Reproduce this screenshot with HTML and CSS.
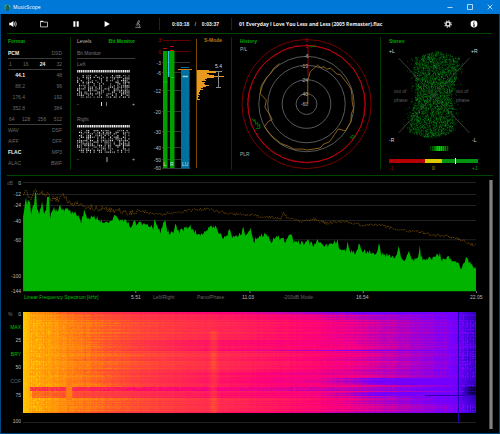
FILE: index.html
```html
<!DOCTYPE html>
<html lang="en">
<head>
<meta charset="utf-8">
<title>MusicScope</title>
<link rel="stylesheet" href="styles.css">
</head>
<body>
<div class="window">
  <header class="titlebar">
    <svg class="app-icon" viewBox="0 0 14 14"><circle cx="7" cy="7" r="6.6" fill="#1f8f86"/><path d="M8.5 2 5 6l2 2-3 4h6M7 4l3 4-1 3" fill="none" stroke="#06333f" stroke-width="1.6"/><path d="M3 4l2-2M10 3l2 3" stroke="#7fe0b0" stroke-width="1"/></svg>
    <h1 class="app-name">MusicScope</h1>
    <div class="window-buttons">
      <button aria-label="Minimize"><svg viewBox="0 0 6 6"><path d="M.5 3.5h5"/></svg></button>
      <button aria-label="Maximize"><svg viewBox="0 0 6 6"><path d="M.5 .5h5v5h-5z"/></svg></button>
      <button aria-label="Close"><svg viewBox="0 0 6 6"><path d="M.7 .7l4.6 4.6M5.3 .7L.7 5.3"/></svg></button>
    </div>
  </header>

  <div class="toolbar">
    <div class="tools">
      <button aria-label="Volume"><svg viewBox="0 0 8 8"><path d="M.3 2.8h1.6L4.4.9v6.2L1.9 5.2H.3z" fill="#fff"/><path d="M5.3 2.3q1 1.7 0 3.4M6.5 1.4q1.7 2.6 0 5.2" fill="none" stroke="#ddd" stroke-width=".8"/></svg></button>
      <button aria-label="Open folder"><svg viewBox="0 0 8 8"><path d="M.5 6.9V1.2h2.4l.8.9h3.8v4.8z" fill="none" stroke="#ddd" stroke-width=".8"/><path d="M.5 1.6h2.8" stroke="#fff" stroke-width="1"/></svg></button>
      <button aria-label="Pause"><svg viewBox="0 0 8 8"><path d="M1.4 1.2h2v5.6h-2zM4.7 1.2h2v5.6h-2z" fill="#fff"/></svg></button>
      <button aria-label="Play"><svg viewBox="0 0 8 8"><path d="M1.6 1l5.2 3-5.2 3z" fill="#fff"/></svg></button>
      <button aria-label="Analyze"><svg viewBox="0 0 8 8"><path d="M4.6.4L3 3.8l1 .5L5.6 1zM1.8 5h3M1.3 7.4h5.6M4.6 3.4q2.6 1.5 .6 3.8" fill="none" stroke="#aaa" stroke-width=".7"/></svg></button>
    </div>
    <div class="time"><span>0:03:18</span><span class="slash">/</span><span>0:03:37</span></div>
    <div class="track">01 Everyday I Love You Less and Less (2005 Remaster).flac</div>
    <div class="extras">
      <button aria-label="Settings"><svg viewBox="0 0 8 8"><circle cx="4" cy="4" r="2" fill="none" stroke="#ddd" stroke-width="1.5"/><circle cx="4" cy="4" r="3.2" fill="none" stroke="#ddd" stroke-width="1.1" stroke-dasharray="1.25 1.263"/></svg></button>
      <button aria-label="Information"><svg viewBox="0 0 8 8"><circle cx="4" cy="4" r="3.4" fill="#fff"/><path d="M4 1.6v1.1M3.3 3.6H4v2.3M3.1 6h1.8" fill="none" stroke="#000" stroke-width=".9"/></svg></button>
    </div>
  </div>

  <main class="content">
    <div class="panels">
      <section class="panel format">
        <h2>Format</h2>
        <div class="row rule"><b>PCM</b><span>DSD</span></div>
        <div class="row rule inset"><span>1</span><span>16</span><b>24</b><span>32</span></div>
        <div class="row rates"><b>44.1</b><span>48</span></div>
        <div class="row rates"><span>88.2</span><span>96</span></div>
        <div class="row rates"><span>176.4</span><span>192</span></div>
        <div class="row rates"><span>352.8</span><span>384</span></div>
        <div class="row rule inset"><span>64</span><span>128</span><span>256</span><span>512</span></div>
        <div class="row"><span>WAV</span><span>DSF</span></div>
        <div class="row"><span>AIFF</span><span>DFF</span></div>
        <div class="row"><b>FLAC</b><span>MP3</span></div>
        <div class="row"><span>ALAC</span><span>BWF</span></div>
      </section>

      <section class="panel bits">
        <div class="tabs"><button class="tab">Levels</button><button class="tab active">Bit Monitor</button></div>
        <div class="row rule"><span>Bit Monitor</span></div>
        <div class="row"><span>Left</span></div>
        <svg class="bit-map" data-seed="3" viewBox="0 0 53 28"></svg>
        <svg class="offset" viewBox="77 98 58 16"><path d="M101.500 102v4" stroke="#ddd"/><path d="M106.500 102v4" stroke="#777"/><text x="77" y="106">-</text><text x="132" y="106">+</text></svg>
        <div class="row"><span>Right</span></div>
        <svg class="bit-map" data-seed="8" viewBox="0 0 53 28"></svg>
        <svg class="offset" viewBox="77 98 58 16"><path d="M107 102v5" stroke="#aaa"/><text x="77" y="106">-</text><text x="132" y="106">+</text></svg>
      </section>

      <section class="panel ruled">
        <svg class="plot" id="meters" viewBox="140 37 91 133">
          <path d="M162 62.500h28M162 72.500h28M162 90.500h28M162 111.500h28M162 131.500h28M162 147.500h28M162 159.500h28M162 168.500h28" stroke="#333"/>
          <path d="M163 40.500h27M163 51.500h27" stroke="#600"/>
          <path d="M163 48.500h4M170 46.500h4" stroke="#c00"/>
          <rect x="163" y="51" width="4.500" height="117" fill="#00a000"/>
          <rect x="170" y="51" width="4.500" height="117" fill="#00a000"/>
          <path d="M163 82h4.500M170 77.500h4.500" stroke="#0c0"/>
          <path d="M170 50.500h4" stroke="#e00"/>
          <rect x="168" y="51" width="1.500" height="26" fill="#40b8f0"/>
          <rect x="181" y="70" width="8.500" height="98.500" fill="#00709f"/>
          <path d="M181 67.500h8" stroke="#00709f"/>
          <path d="M178 69.500h14" stroke="#c98018"/>
          <path d="M182.500 76.500h5.500" stroke="#9cc" stroke-width="1.500"/>
          <path d="M196.500 39v129" stroke="#7a4c00"/>
          <path id="histogram" fill="#e89a20"/>
          <path d="M218.500 71v16M216 71.500h5M216 87.500h5" stroke="#888" fill="none"/>
          <g class="end"><text x="161" y="42" class="red">3</text><text x="161" y="53.500" class="red">0</text><text x="161" y="64.500">-3</text><text x="161" y="74.500">-6</text><text x="161" y="92.500">-12</text><text x="161" y="113.500">-20</text><text x="161" y="133.500">-30</text><text x="161" y="149.500">-40</text><text x="161" y="161.500">-50</text><text x="161" y="170">-60</text></g>
          <g class="bright"><text x="163.500" y="165.500">L</text><text x="170" y="165.500">R</text><text x="182" y="165.500">LU</text><text x="215" y="68">5.4</text></g>
          <text x="204" y="42" class="amber bold">S-Mode</text>
        </svg>
      </section>

      <section class="panel ruled">
        <svg class="plot" viewBox="231 37 149 133">
          <g fill="none">
            <g stroke="#5a5a5a"><circle cx="306" cy="104.500" r="48"/><circle cx="306" cy="104.500" r="39"/><circle cx="306" cy="104.500" r="24.500"/><circle cx="306" cy="104.500" r="10.500"/></g>
            <circle cx="306" cy="104.500" r="65" stroke="#7a0000"/><circle cx="306" cy="104.500" r="59" stroke="#a80010"/>
            <path id="true-peak" stroke="#c80010" stroke-width=".8"/>
            <path d="M307.500 46v30" stroke="#a00000"/>
            <path id="loudness-trace" stroke="#b07820" stroke-width=".8"/>
            <path d="M309 46l2 1 2-1 3 1M251 119l2 3 1-2 1 5 2-2 0 4 2-2 0 4-4 0M350 138l2-2 3 1-2 2z" stroke="#008c00" stroke-width=".8"/>
          </g>
          <g class="middle"><text x="306" y="42" class="red">3</text><text x="306" y="48" class="red">0</text><text x="306" y="58.500">-6</text><text x="304" y="68">-13</text><text x="304" y="82">-24</text><text x="304" y="96">-40</text><text x="304" y="106.500">-60</text></g>
          <text x="239" y="43" class="green bold">History</text>
          <text x="239" y="51" class="light">P/L</text><text x="239" y="157" class="light">PLR</text>
        </svg>
      </section>

      <section class="panel">
        <svg class="plot" viewBox="380 37 112 133">
          <path id="scope" stroke="#00690c" stroke-width=".9"/>
          <path id="scope-bright" stroke="#12a824" stroke-width=".9"/>
          <path d="M397.500 58l71 75M468.500 58l-71 75" stroke="#3a3a3a"/>
          <g id="balance"></g>
          <rect x="388" y="159" width="36" height="4" fill="#b40000"/><rect x="424" y="159" width="17" height="4" fill="#d8cc00"/><rect x="441" y="159" width="36" height="4" fill="#009410"/>
          <path d="M454.500 158v6" stroke="#fff"/>
          <text x="388" y="43" class="green bold">Stereo</text>
          <g class="bright"><text x="388" y="53">+L</text><text x="470" y="53">+R</text><text x="388" y="142">-R</text><text x="471" y="142">-L</text></g>
          <g class="dim"><text x="393" y="93">out of</text><text x="393" y="102">phase</text><text x="455" y="93">out of</text><text x="455" y="102">phase</text></g>
          <text x="388" y="170" class="dark-red">-1</text><text x="431" y="170" class="yellow">0</text><text x="471" y="170" class="green">+1</text>
        </svg>
      </section>
    </div>

    <div class="analysis">
      <div class="charts">
        <svg class="plot spectrum" viewBox="7 176 476 117">
          <path d="M23 182.500h452M23 194.500h452M23 205.500h452M23 220.500h452M23 239.500h452" stroke="#222"/>
          <path id="spectrum-fill" fill="#00b400"/>
          <path id="spectrum-peak" fill="none" stroke="#855705" stroke-width=".9" stroke-dasharray="1.200 1"/>
          <path d="M135.500 291v2M249.500 291v2M362.500 291v2M475.500 291v2" stroke="#888"/>
          <text x="7" y="184.500" class="dim">dB</text>
          <g class="end"><text x="21" y="184.500">0</text><text x="21" y="196">-12</text><text x="21" y="207">-24</text><text x="21" y="222.500">-40</text><text x="21" y="241.500">-60</text><text x="21" y="278">-100</text><text x="21" y="292.500">-144</text></g>
        </svg>
        <div class="axis">
          <button class="mode active">Linear Frequency Spectrum [kHz]</button><span>5.51</span>
          <button class="mode">Left/Right</button><button class="mode">Pano/Phase</button><span>11.03</span>
          <button class="mode">-200dB Mode</button><span>16.54</span><span>22.05</span>
        </div>
        <div class="spectrogram">
          <div class="scale">
            <div class="percent"><span>%</span><b>0</b></div>
            <button class="mode active">MAX</button><span>25</span>
            <button class="mode active">BRY</button><span>50</span>
            <button class="mode">COF</button><span>75</span>
            <span class="last">100</span>
          </div>
          <canvas id="waterfall" width="452" height="111"></canvas>
        </div>
      </div>
      <div class="scrollbar"></div>
    </div>
  </main>
</div>
<script src="charts.js"></script>
</body>
</html>
```

FILE: styles.css
```css
* { box-sizing: border-box; }
body { margin: 0; background: #000; color: #bbb; font: 5px/8px "Liberation Sans", Arial, sans-serif; }
button { margin: 0; padding: 0; border: 0; background: none; color: inherit; font: inherit; text-align: left; white-space: nowrap; }
h1, h2 { margin: 0; font-size: 5px; line-height: 8px; }
svg { display: block; }

.window { display: flex; flex-direction: column; min-height: 100vh; border: solid #004a84; border-width: 0 1px 1px; }
.titlebar { display: flex; align-items: center; height: 14px; margin: 0 -1px; padding: 0 18px 0 4px; background: #0078d7; color: #fff; }
.app-icon { width: 7px; height: 7px; margin-right: 2px; }
.app-name { font: 5px/8px "Open Sans", sans-serif; }
.window-buttons { display: flex; gap: 14px; margin-left: auto; }
.titlebar { padding-right: 7px; }
.window-buttons svg { width: 6px; height: 6px; fill: none; stroke: #fff; stroke-width: .7; }

.toolbar { display: flex; align-items: center; height: 20px; margin: 0 7px 0 6px; border-bottom: 1px solid #004600; font-weight: bold; color: #eee; }
.toolbar svg { width: 8px; height: 8px; }
.tools { display: flex; justify-content: space-between; width: 152px; padding: 0 17px 0 2px; }
.time { display: flex; justify-content: space-between; width: 73px; height: 12px; padding: 0 12px; border: solid #003c00; border-width: 0 1px; line-height: 12px; }
.slash { font-weight: normal; }
.track { flex: 1; padding-left: 7px; font-family: "Open Sans", sans-serif; white-space: nowrap; }
.extras { display: flex; gap: 18px; padding-right: 14px; }

.content { display: flex; flex-direction: column; flex: 1; padding: 3px 6px 4px; }
.panels { display: grid; grid-template-columns: 64fr 69fr 92fr 149fr 112fr; padding-bottom: 5px; border-bottom: 1px solid #004600; }
.panel { min-width: 0; }
.ruled, .format { border-right: 1px solid #003800; }
.panel h2 { margin-bottom: 3px; color: #00a800; }
.format { padding: 0 8px 0 1px; color: #6a6a6a; }
.bits { padding: 0 5px 0 6px; color: #777; }
.tabs { display: flex; justify-content: space-between; margin-bottom: 3px; color: #bbb; }
.active { color: #00b400; }
.tab.active { font-weight: bold; }
.row { display: flex; justify-content: space-between; height: 11px; line-height: 11px; }
.row b { color: #eee; }
.rule { border-bottom: 1px solid #3c3c3c; }
.inset { padding-left: 1px; }
.rates { display: grid; grid-template-columns: 17fr 37fr; text-align: right; }
.bit-map { width: 92%; height: 28px; }
.offset { width: 100%; height: 16px; }
.plot { width: 100%; height: auto; }

text { font-size: 5px; fill: #bbb; }
.end text { text-anchor: end; }
.middle text { text-anchor: middle; }
.light text, text.light { fill: #aaa; }
.bright text { fill: #ddd; }
.dim text, text.dim { fill: #5c5c5c; }
text.red { fill: #c00000; }
text.dark-red { fill: #a00000; }
text.green { fill: #00a800; }
text.yellow { fill: #b8a800; }
text.amber { fill: #b87818; }
text.bold { font-weight: bold; }

.analysis { display: flex; justify-content: space-between; gap: 5px; flex: 1; }
.charts { flex: 1; min-width: 0; }
.scrollbar { width: 4px; margin-top: 4px; background: #808080; border: solid #505050; border-width: 0 1px; }
.axis { display: grid; grid-template-columns: 107fr 22fr 44fr 45fr 41fr 73fr 114fr 14fr; padding: 0 0 0 17px; height: 10px; line-height: 8px; }
.axis > * { min-width: 0; height: 8px; }
.mode { color: #666; }
.mode.active { color: #00c000; }
.spectrogram { display: flex; margin-top: 5px; }
.scale { display: grid; grid-template-rows: 12px 13px 14px 13px 14px 14px 14px 23px; align-content: start; width: 16px; padding-right: 2px; align-items: center; text-align: right; color: #bbb; }
.scale .mode { text-align: right; }
.percent { display: flex; justify-content: space-between; padding-left: 1px; color: #777; }
.percent b { font-weight: normal; color: #bbb; }
.last { align-self: end; }
#waterfall { flex: 1; min-width: 0; height: 111px; margin: 4px 8px 0 0; }
```

FILE: charts.js
```js
function randomizer(seed) {
  let s = seed * 7919 + 17;
  return function () {
    s = (s + 0x6d2b79f5) | 0;
    let t = Math.imul(s ^ (s >>> 15), 1 | s);
    t = (t + Math.imul(t ^ (t >>> 7), 61 | t)) ^ t;
    return ((t ^ (t >>> 14)) >>> 0) / 4294967296;
  };
}
function setPath(id, d) { document.getElementById(id).setAttribute("d", d); }
function sample(points, x) {
  for (let i = 1; i < points.length; i++) {
    if (x <= points[i][0]) {
      const a = points[i - 1], b = points[i];
      const t = Math.max(0, (x - a[0]) / (b[0] - a[0]));
      return a.slice(1).map((v, k) => v + (b[k + 1] - v) * t);
    }
  }
  return points[points.length - 1].slice(1);
}
function ramp(v, from, to) { return Math.max(0, Math.min(1, (v - from) / (to - from))); }

// Bit monitor
document.querySelectorAll(".bit-map").forEach(svg => {
  const rnd = randomizer(Number(svg.dataset.seed));
  let head = "", bright = "", soft = "";
  for (let c = 0; c < 29; c++) {
    const x = (c * 1.83).toFixed(2);
    head += `M${x} 0h1.3v2.6h-1.3z`;
    const density = 0.4 + rnd() * 0.5;
    for (let r = 0; r < 14; r++) {
      if (rnd() < density) {
        const cell = `M${x} ${(5 + r * 1.65).toFixed(2)}h1v1.3h-1z`;
        if (rnd() < 0.5) bright += cell; else soft += cell;
      }
    }
  }
  svg.innerHTML = `<path d="${head}" fill="#eee"/><path d="${bright}" fill="#ddd"/><path d="${soft}" fill="#888"/>`;
});

// Loudness histogram
const bars = [12, 25, 19, 10, 12, 17, 27, 17, 10, 8, 9, 5, 8, 7, 8, 12, 9, 6, 4, 6, 3, 3, 2, 2, 3, 1, 2, 1, 1, 3];
setPath("histogram", bars.map((w, i) => `M197 ${70 + i}h${w}v1H197z`).join(""));

// History circle
const rndHistory = randomizer(5);
let peak = "";
for (let a = 0; a <= 355; a += 2) {
  const r = 58.3 + rndHistory() * 1.1, t = (a - 90) * Math.PI / 180;
  peak += `${a ? "L" : "M"}${(306 + r * Math.cos(t)).toFixed(1)} ${(104.5 + r * Math.sin(t)).toFixed(1)}`;
}
setPath("true-peak", peak);
const trace = [[232,211],[232,140],[238,112],[250,104],[262,95],[272,102],[280,98],[290,107],[300,103],[310,111],[318,120],[330,122],[340,135],[355,155],[361,165],[366,185],[366,205],[370,225],[363,240],[362,265],[345,292],[325,288],[313,305],[305,315],[295,325],[280,333],[270,345],[250,349],[230,350],[215,346],[190,347],[170,337],[150,330],[135,318],[120,305],[102,280],[112,262],[125,258],[115,240],[103,222],[107,200],[88,180],[92,160],[95,150],[110,130],[120,120],[130,105],[145,88]];
setPath("loudness-trace", trace.map((p, i) => {
  const j = i > 1 ? rndHistory() - 0.5 : 0;
  return `${i ? "L" : "M"}${(p[0] / 3 + 230 + j).toFixed(1)} ${(p[1] / 3 + 34 + j).toFixed(1)}`;
}).join(""));

// Stereo scope
const rndScope = randomizer(11);
let dots = "", brightDots = "";
for (let i = 0; i < 3600; i++) {
  const v = rndScope() * 2 - 1;
  const half = 24 + 7 * Math.min(1, Math.abs(v) * 1.6);
  const u = i % 3 ? (rndScope() * 2 - 1) * 0.72 : rndScope() + rndScope() - 1;
  const x = 433 + u * half - v * 3;
  const y = 95 + v * (44 - Math.abs(u) * 9);
  const dot = `M${x.toFixed(1)} ${y.toFixed(1)}h.6`;
  if (i % 5 === 0) brightDots += dot; else dots += dot;
}
setPath("scope", dots);
setPath("scope-bright", brightDots);
const stripes = [60, 20, 90, 60, 110, 140, 160, 200, 170, 220, 150, 200, 130, 170, 90, 130, 50, 100, 30];
document.getElementById("balance").innerHTML = stripes.map((g, i) =>
  `<rect x="${429 + i}" y="146" width="1" height="5" fill="rgb(0,${g},0)"/>`).join("");

// Frequency spectrum
const level = [[23,217],[25,203],[26,198],[27,206],[28,200],[30,201],[31,214],[33,205],[34,205],[35,192],[36,192],[37,208],[39,214],[42,202],[44,213],[46,209],[47,197],[49,197],[50,217],[54,208],[57,212],[60,206],[64,211],[68,208],[72,213],[76,213],[81,222],[84,211],[87,219],[92,216],[96,217],[100,220],[106,223],[110,222],[114,216],[120,220],[126,220],[130,226],[135,218],[136,225],[138,221],[150,227],[153,227],[154,218],[156,226],[160,231],[165,220],[167,230],[170,233],[174,231],[175,223],[177,231],[180,231],[190,225],[192,230],[200,234],[207,229],[215,226],[217,231],[222,238],[230,230],[232,236],[240,234],[243,228],[245,235],[250,227],[253,242],[258,235],[266,234],[270,242],[276,236],[285,241],[291,232],[293,241],[305,243],[307,237],[309,243],[315,245],[317,237],[319,244],[330,245],[337,240],[339,250],[345,251],[347,243],[349,251],[356,252],[358,241],[360,249],[365,251],[376,253],[378,242],[380,253],[387,255],[390,256],[395,257],[398,246],[400,256],[405,259],[408,250],[410,258],[416,260],[419,246],[420,258],[430,258],[439,254],[441,259],[449,257],[455,262],[460,267],[465,258],[470,264],[475,267]];
const rndLevel = randomizer(21);
let fill = "M23 291";
for (let x = 23; x <= 475; x++) {
  const y = sample(level, x)[0] + (rndLevel() - 0.45) * (x < 50 ? 2 : 5);
  fill += `L${x} ${y.toFixed(1)}`;
}
setPath("spectrum-fill", fill + "L475 291Z");
const hold = [[23,195],[25,190],[28,196],[31,198],[34,189],[38,192],[42,193],[46,194],[52,199],[58,199],[63,195],[70,203],[80,204],[90,207],[100,209],[110,210],[120,211],[130,213],[140,211],[150,213],[160,214],[175,213],[190,210],[208,209],[220,212],[235,214],[250,215],[265,217],[280,218],[283,213],[287,218],[300,221],[313,219],[325,223],[342,221],[360,225],[380,225],[400,230],[415,231],[430,235],[445,236],[458,239],[470,244],[475,245]];
let line = "";
for (let x = 23; x <= 475; x++) {
  const y = sample(hold, x)[0] + (rndLevel() - 0.5) * (x < 140 ? 6 : 3);
  line += `${x > 23 ? "L" : "M"}${x} ${y.toFixed(1)}`;
}
setPath("spectrum-peak", line);

// Spectrogram: position along the palette follows frequency, shifted per row and cell
const palette = [[0,255,205,0],[10,255,165,5],[35,255,148,12],[65,255,118,22],[95,255,84,45],[150,255,56,68],[225,255,32,88],[280,255,8,110],[315,250,0,130],[350,215,0,158],[385,172,0,198],[415,145,0,228],[436,115,0,255],[450,60,0,210],[475,12,0,70]];
const canvas = document.getElementById("waterfall");
const ctx = canvas.getContext("2d");
const rnd = randomizer(31);
const columns = Array.from({ length: 452 }, () => (rnd() - 0.5) * 18);
for (let y = 0; y < 101; y++) {
  let row = (rnd() - 0.5) * 52;
  if (y < 3) row += 100 - y * 20;
  else if (y < 8) row += 20;
  else if (y > 85 && y < 92) row -= 10;
  if (y === 100) row += 50;
  const edge = (rnd() - 0.5) * 8;
  for (let x = 0; x < 452; x++) {
    let p = x + columns[x] + (rnd() - 0.5) * 24;
    p += row * ramp(x, -20, 120) * (1 - 0.7 * ramp(x, 340, 430));
    if (x < 7) p = x * 0.8 + rnd() * 3;
    if (y >= 75 && y < 79 && x > 6) p += (90 + rnd() * 110) * (1 - 0.7 * ramp(x, 120, 330));
    if (y >= 79 && y < 86 && x > 8) p += 55 * (1 - ramp(x, 200, 320));
    if (y >= 28 && y < 38) p += 60 * ramp(x, 60, 160) * (1 - ramp(x, 200, 320));
    if (y >= 60 && y < 75) p += 50 * ramp(x, 70, 180) * (1 - ramp(x, 250, 330));
    if (y >= 66 && y < 73) p += 75 * ramp(x, 290, 350);
    if (y >= 80 && y < 92) p += (y < 84 ? 75 : 28) * ramp(x, 290, 350);
    if (y > 18) p -= 70 * Math.max(0, 1 - Math.abs(x - 190) / 6);
    if (y > 10 && y < 73 && [11, 12, 18, 25, 26, 34, 40].includes(x) && rnd() < 0.6) p = 5 + rnd() * 12;
    if (x >= 43 && x < 49 && y > 65 && y < 88) p = 52 + rnd() * 14;
    if (y === 38) p += 80 * ramp(x, 60, 200);
    if (y === 83 && x > 350) p += 30;
    p = Math.max(0, p);
    p = Math.min(p, x < 430 ? 436 : 436 + (x - 430) * 0.9 + edge * ramp(x, 430, 445));
    if (y > 73 && y < 84) p += 22 * ramp(x, 436, 448);
    if (y === 83 && x > 400) p = 456;
    const c = sample(palette, p);
    ctx.fillStyle = `rgb(${c.map(Math.round).join(",")})`;
    ctx.fillRect(x, y, 1, 1);
  }
}
ctx.fillStyle = "#202020";
ctx.fillRect(0, 110, 452, 1);
ctx.fillStyle = "#2a00b8";
ctx.fillRect(434, 0, 1, 111);
```
